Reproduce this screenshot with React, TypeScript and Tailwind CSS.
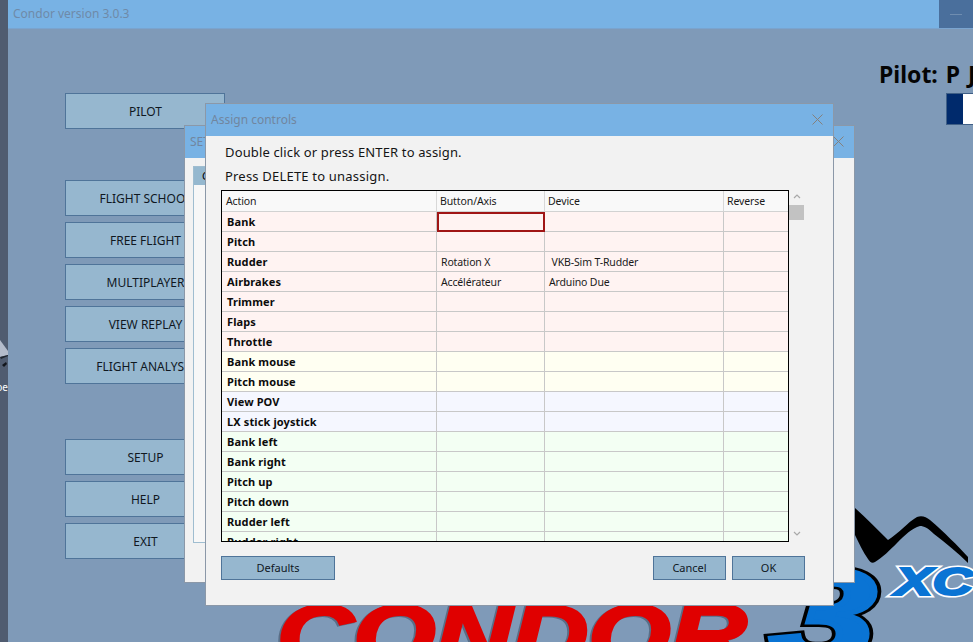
const font = "font-['Noto_Sans',sans-serif]";

const topButtons = ['PILOT'];
const flightButtons = ['FLIGHT SCHOOL', 'FREE FLIGHT', 'MULTIPLAYER', 'VIEW REPLAY', 'FLIGHT ANALYSIS'];
const systemButtons = ['SETUP', 'HELP', 'EXIT'];

const pink = 'bg-[#fff3f2]';
const yellow = 'bg-[#fffff2]';
const blue = 'bg-[#f5f7ff]';
const green = 'bg-[#f3fff3]';

const rows = [
  { action: 'Bank', tone: pink, axis: '', device: '', selected: true },
  { action: 'Pitch', tone: pink, axis: '', device: '' },
  { action: 'Rudder', tone: pink, axis: 'Rotation X', device: ' VKB-Sim T-Rudder' },
  { action: 'Airbrakes', tone: pink, axis: 'Accélérateur', device: 'Arduino Due' },
  { action: 'Trimmer', tone: pink, axis: '', device: '' },
  { action: 'Flaps', tone: pink, axis: '', device: '' },
  { action: 'Throttle', tone: pink, axis: '', device: '' },
  { action: 'Bank mouse', tone: yellow, axis: '', device: '' },
  { action: 'Pitch mouse', tone: yellow, axis: '', device: '' },
  { action: 'View POV', tone: blue, axis: '', device: '' },
  { action: 'LX stick joystick', tone: blue, axis: '', device: '' },
  { action: 'Bank left', tone: green, axis: '', device: '' },
  { action: 'Bank right', tone: green, axis: '', device: '' },
  { action: 'Pitch up', tone: green, axis: '', device: '' },
  { action: 'Pitch down', tone: green, axis: '', device: '' },
  { action: 'Rudder left', tone: green, axis: '', device: '' },
  { action: 'Rudder right', tone: green, axis: '', device: '' },
];

const columns = 'grid grid-cols-[215px_108px_179px_64px]';
const logoFont = "'Liberation Sans', sans-serif";

function MenuButton({ label }: { label: string }) {
  return (
    <button className="h-[36px] w-[160px] overflow-hidden whitespace-nowrap border border-[#4f7499] bg-[#96b7cf] pl-[1px] pt-[2px] text-[12px] text-[#10181f]">
      {label}
    </button>
  );
}

function DialogButton({ label, width }: { label: string; width: string }) {
  return (
    <button className={`h-[24px] ${width} border border-[#4f7499] bg-[#96b7cf] text-[11px] text-[#10181f]`}>
      {label}
    </button>
  );
}

function CloseIcon() {
  return (
    <svg width="11" height="11" viewBox="0 0 11 11" className="-mt-[1px] text-[#85807c]">
      <path d="M0.5 0.5L10.5 10.5M10.5 0.5L0.5 10.5" stroke="currentColor" strokeWidth="1" fill="none" />
    </svg>
  );
}

function TitleBar({ title }: { title: string }) {
  return (
    <div className="flex h-[32px] items-center justify-between bg-[#78b2e4] pl-[5px] pr-[10px]">
      <span className="whitespace-nowrap text-[12px] text-[#71869f]">{title}</span>
      <CloseIcon />
    </div>
  );
}

function Logo() {
  return (
    <svg width="973" height="642" viewBox="0 0 973 642" className="absolute inset-0">
      {/* mountain ridge */}
      <path
        d="M855 508C866 518 878 530 888 540C898 534 908 522 917 517C922 515 926 517 930 520C944 532 958 546 968 557L968 563C958 553 946 543 934 534C928 528 924 526 920 526C912 528 905 535 897 543C890 550 882 558 875 562C872 564 870 562 868 559C863 552 859 543 855 535Z"
        fill="#000"
      />
      {/* CONDOR wordmark */}
      <text x="275" y="664" textLength="470" lengthAdjust="spacingAndGlyphs" fontFamily={logoFont} fontWeight="700" fontStyle="italic" fontSize="84" fill="#2c3a4c" stroke="#2c3a4c" strokeWidth="3" opacity="0.45">
        CONDOR
      </text>
      <text x="277" y="663" textLength="470" lengthAdjust="spacingAndGlyphs" fontFamily={logoFont} fontWeight="700" fontStyle="italic" fontSize="84" fill="#e00000" stroke="#e00000" strokeWidth="3">
        CONDOR
      </text>
      {/* the 3, black outline under a heavier blue */}
      <text x="770" y="660" textLength="106" lengthAdjust="spacingAndGlyphs" fontFamily={logoFont} fontWeight="700" fontStyle="italic" fontSize="128" fill="#000" stroke="#000" strokeWidth="10">
        3
      </text>
      <text x="770" y="660" textLength="106" lengthAdjust="spacingAndGlyphs" fontFamily={logoFont} fontWeight="700" fontStyle="italic" fontSize="128" fill="#0a74d4" stroke="#0a74d4" strokeWidth="5">
        3
      </text>
      {/* XC badge */}
      <text x="895" y="595" textLength="78" lengthAdjust="spacingAndGlyphs" fontFamily={logoFont} fontWeight="700" fontStyle="italic" fontSize="38" fill="#fff" stroke="#fff" strokeWidth="5">
        XC
      </text>
      <text x="895" y="595" textLength="78" lengthAdjust="spacingAndGlyphs" fontFamily={logoFont} fontWeight="700" fontStyle="italic" fontSize="38" fill="#0a74d4" stroke="#0a74d4" strokeWidth="2">
        XC
      </text>
    </svg>
  );
}

export default function App() {
  return (
    <div className={`relative flex h-[642px] w-[973px] overflow-hidden bg-[#7f9ab8] ${font}`}>
      {/* desktop behind the app */}
      <div className="relative w-[8px] shrink-0 overflow-hidden bg-[#505c70]">
        <svg width="8" height="30" viewBox="0 0 8 30" className="absolute left-0 top-[340px]">
          <path d="M0 0L8 11L8 15L0 17Z" fill="#b4bccb" />
          <path d="M0 17L8 15L8 16L1 19Z" fill="#20262f" />
          <path d="M2 25L6 22L7 24L4 27Z" fill="#12161c" />
        </svg>
        <span className="absolute right-0 top-[382px] text-[10px] leading-none text-white">oe</span>
      </div>

      <div className="flex min-w-0 flex-1 flex-col">
        {/* main title bar */}
        <div className="flex h-[29px] shrink-0 items-center justify-between border-b border-[#7aa4cf] bg-[#78b2e4] pl-[5px]">
          <span className="text-[12px] text-[#6f8aa8]">Condor version 3.0.3</span>
          <div className="flex h-[28px] w-[34px] items-center justify-center bg-[#4a6f9c]">
            <div className="h-px w-[12px] bg-[#6f8db0]" />
          </div>
        </div>

        <div className="flex flex-1 justify-between">
          {/* main menu */}
          <div className="ml-[57px] flex flex-col pt-[64px]">
            <div className="flex flex-col gap-[6px]">
              {topButtons.map(label => <MenuButton key={label} label={label} />)}
            </div>
            <div className="mt-[51px] flex flex-col gap-[6px]">
              {flightButtons.map(label => <MenuButton key={label} label={label} />)}
            </div>
            <div className="mt-[55px] flex flex-col gap-[6px]">
              {systemButtons.map(label => <MenuButton key={label} label={label} />)}
            </div>
          </div>

          {/* pilot */}
          <div className="flex w-[94px] flex-col overflow-hidden pt-[28px]">
            <div className="h-[36px] whitespace-nowrap text-[23px] font-bold leading-[34px] text-[#050505] [word-spacing:2px]">Pilot: P J</div>
            <div className="ml-[67px] flex h-[32px] w-[60px] border border-[#3f5f86]">
              <div className="w-[16px] bg-[#002a6c]" />
              <div className="flex-1 bg-white" />
            </div>
          </div>
        </div>
      </div>

      <Logo />

      {/* SETUP window, behind the dialog */}
      <div className="absolute left-[184px] top-[125px] flex h-[458px] w-[671px] flex-col border border-[#8b98a8] bg-[#f2f2f2]">
        <TitleBar title="SETUP" />
        <div className="ml-[8px] mt-[8px] h-[377px] w-[640px] border border-[#9fbdd0] bg-[#f7f7f7]">
          <div className="h-[18px] w-[60px] bg-[#95b8cf] pl-[8px] text-[11px] leading-[18px]">Controls</div>
        </div>
      </div>

      {/* Assign controls dialog */}
      <div className="absolute left-[205px] top-[103px] flex h-[503px] w-[629px] flex-col border border-[#8b98a8] bg-[#f2f2f2]">
        <TitleBar title="Assign controls" />
        <div className="flex-1 pl-[15px]">
          <p className="pl-[4px] pt-[6px] text-[13px] leading-[20px] tracking-[0.14px] text-[#151515]">Double click or press ENTER to assign.</p>
          <p className="pl-[4px] pt-[4px] text-[13px] leading-[20px] tracking-[0.2px] text-[#151515]">Press DELETE to unassign.</p>

          <div className="mt-[4px] flex">
            <div className="h-[352px] w-[568px] overflow-hidden border border-black bg-white">
              <div className={`${columns} h-[21px] border-b border-[#d2d2d2] bg-[#f9f9f9] text-[10.5px] leading-[20px] tracking-[-0.1px] text-[#1a1a1a]`}>
                {['Action', 'Button/Axis', 'Device', 'Reverse'].map((name, i) => (
                  <div key={name} className={`border-r border-[#d8d8d8] last:border-r-0 ${i === 0 ? 'pl-[4px]' : 'pl-[3px]'}`}>{name}</div>
                ))}
              </div>
              {rows.map(row => (
                <div key={row.action} className={`${columns} h-[20px] border-b border-[#c8c8c8] text-[10.5px] leading-[20px] tracking-[-0.15px] text-[#1a1a1a] ${row.tone}`}>
                  <div className="border-r border-[#c8c8c8] pl-[5px] text-[11px] font-bold leading-[19px] tracking-[0.12px] text-[#0c0c0c]">{row.action}</div>
                  {row.selected ? (
                    <div className="-mb-px border-2 border-[#a01515]" />
                  ) : (
                    <div className="border-r border-[#c8c8c8] pl-[4px]">{row.axis}</div>
                  )}
                  <div className="whitespace-pre border-r border-[#c8c8c8] pl-[4px]">{row.device}</div>
                  <div />
                </div>
              ))}
            </div>

            {/* scroll bar */}
            <div className="flex h-[352px] w-[16px] flex-col items-center pb-[2px]">
              <svg width="8" height="14" viewBox="0 0 8 14" className="text-[#a9a9a9]">
                <path d="M1 8L4 5L7 8" stroke="currentColor" strokeWidth="1.2" fill="none" />
              </svg>
              <div className="mt-[1px] h-[15px] w-[15px] self-start bg-[#c2c2c2]" />
              <svg width="8" height="14" viewBox="0 0 8 14" className="mt-auto text-[#a9a9a9]">
                <path d="M1 6L4 9L7 6" stroke="currentColor" strokeWidth="1.2" fill="none" />
              </svg>
            </div>
          </div>

          <div className="mt-[14px] flex items-center justify-between pr-[28px]">
            <DialogButton label="Defaults" width="w-[114px]" />
            <div className="flex gap-[6px]">
              <DialogButton label="Cancel" width="w-[73px]" />
              <DialogButton label="OK" width="w-[73px]" />
            </div>
          </div>
        </div>
      </div>
    </div>
  );
}
